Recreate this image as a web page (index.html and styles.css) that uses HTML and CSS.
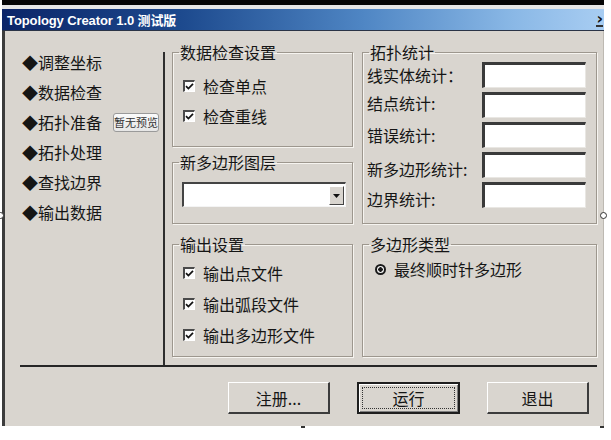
FILE: index.html
```html
<!DOCTYPE html>
<html lang="zh-CN">
<head>
<meta charset="utf-8">
<title>Topology Creator 1.0</title>
<link rel="stylesheet" href="styles.css">
</head>
<body>
<div class="window">
  <div class="topbar"></div>
  <div class="topgap"></div>
  <div class="titlebar">
    <span class="title">Topology Creator 1.0 测试版</span>
    <span class="close">›</span>
  </div>
  <div class="client">
    <div class="main">
      <ul class="steps">
        <li>◆调整坐标</li>
        <li>◆数据检查</li>
        <li>◆拓扑准备<button class="preview">暂无预览</button></li>
        <li>◆拓扑处理</li>
        <li>◆查找边界</li>
        <li>◆输出数据</li>
      </ul>
      <div class="vsep"></div>
      <div class="col mid">
        <fieldset class="grp g1">
          <legend>数据检查设置</legend>
          <div class="body">
            <div class="chk"><span class="box"><svg viewBox="0 0 9 9" width="9" height="9"><path d="M1 4.2 L3.4 6.6 L8 1.8" fill="none" stroke="#111" stroke-width="1.7"/></svg></span>检查单点</div>
            <div class="chk"><span class="box"><svg viewBox="0 0 9 9" width="9" height="9"><path d="M1 4.2 L3.4 6.6 L8 1.8" fill="none" stroke="#111" stroke-width="1.7"/></svg></span>检查重线</div>
          </div>
        </fieldset>
        <fieldset class="grp g2">
          <legend>新多边形图层</legend>
          <div class="body">
            <div class="combo"><span class="drop"><svg viewBox="0 0 7 4" width="7" height="4"><path d="M0 0 H7 L3.5 4 Z" fill="#111"/></svg></span></div>
          </div>
        </fieldset>
        <fieldset class="grp g3">
          <legend>输出设置</legend>
          <div class="body">
            <div class="chk row31"><span class="box"><svg viewBox="0 0 9 9" width="9" height="9"><path d="M1 4.2 L3.4 6.6 L8 1.8" fill="none" stroke="#111" stroke-width="1.7"/></svg></span>输出点文件</div>
            <div class="chk row31"><span class="box"><svg viewBox="0 0 9 9" width="9" height="9"><path d="M1 4.2 L3.4 6.6 L8 1.8" fill="none" stroke="#111" stroke-width="1.7"/></svg></span>输出弧段文件</div>
            <div class="chk row31"><span class="box"><svg viewBox="0 0 9 9" width="9" height="9"><path d="M1 4.2 L3.4 6.6 L8 1.8" fill="none" stroke="#111" stroke-width="1.7"/></svg></span>输出多边形文件</div>
          </div>
        </fieldset>
      </div>
      <div class="col right">
        <fieldset class="grp ga">
          <legend>拓扑统计</legend>
          <div class="body stats">
            <span class="lbl first">线实体统计：</span><span class="field"></span>
            <span class="lbl up">结点统计:</span><span class="field"></span>
            <span class="lbl">错误统计:</span><span class="field"></span>
            <span class="lbl down">新多边形统计:</span><span class="field"></span>
            <span class="lbl down">边界统计:</span><span class="field"></span>
          </div>
        </fieldset>
        <fieldset class="grp gb">
          <legend>多边形类型</legend>
          <div class="body">
            <div class="radio"><span class="dotbox"></span>最终顺时针多边形</div>
          </div>
        </fieldset>
      </div>
    </div>
    <div class="hr"></div>
    <div class="btns">
      <button class="btn">注册...</button>
      <button class="btn focus"><span class="focusring">运行</span></button>
      <button class="btn">退出</button>
    </div>
  </div>
  <span class="handle h-left"></span>
  <span class="handle h-right"></span>
  <span class="tick t-mid"></span>
  <span class="tick t-end"></span>
</div>
</body>
</html>
```

FILE: styles.css
```css
* { box-sizing: border-box; }

html, body {
  margin: 0;
  padding: 0;
  background: #ffffff;
}

body {
  width: 611px;
  height: 440px;
  overflow: hidden;
  font-family: "Noto Sans CJK SC", "Liberation Sans", sans-serif;
  color: #151515;
}

.window {
  position: relative;
  width: 602px;
  margin-left: 2px;
}

.topbar {
  height: 5px;
  background: #050505;
}

.topgap {
  height: 4px;
  background: #e6e6e6;
}

.titlebar {
  height: 22px;
  display: flex;
  align-items: center;
  justify-content: space-between;
  padding: 0 1px 0 5px;
  background: linear-gradient(90deg, #0b2468 0%, #1d4a8e 30%, #4f86c4 60%, #8ab8e6 85%, #a8cdf2 100%);
  border-bottom: 1px solid #2a3346;
}

.title {
  font-family: "Liberation Sans", "Noto Sans CJK SC", sans-serif;
  font-weight: bold;
  font-size: 13px;
  color: #ffffff;
  letter-spacing: -0.1px;
}

.close {
  font-family: "DejaVu Sans", sans-serif;
  font-weight: bold;
  font-size: 16px;
  line-height: 13px;
  color: #111;
  border-bottom: 2px solid #333;
}

.client {
  height: 395px;
  background: #d9d5cf;
  border-left: 3px solid #3c3c3c;
  border-right: 1px solid #bdb9b2;
  padding-top: 11px;
}

.main {
  display: flex;
  height: 323px;
}

.steps {
  list-style: none;
  margin: 0;
  padding: 5px 0 0 17px;
  width: 158px;
  font-size: 16px;
}

.steps li {
  height: 30px;
  line-height: 30px;
  display: flex;
  align-items: center;
  white-space: nowrap;
}

.preview {
  margin-left: 11px;
  width: 46px;
  height: 19px;
  padding: 0;
  font-family: "Noto Sans CJK SC", sans-serif;
  font-size: 11px;
  line-height: 17px;
  color: #333;
  background: linear-gradient(#fbfbfb, #e6e6e6);
  border: 1px solid #9a9a9a;
  border-radius: 3px;
}

.vsep {
  width: 2px;
  margin-top: 10px;
  background: #2e2e2e;
}

.col {
  display: flex;
  flex-direction: column;
}

.mid {
  width: 181px;
  margin-left: 7px;
}

.right {
  width: 235px;
  margin-left: 9px;
}

.grp {
  margin: 0;
  padding: 0;
  min-width: 0;
  border: 1px solid #9d978e;
  box-shadow: inset 1px 1px 0 #f6f4f0, 1px 1px 0 #f6f4f0;
}

.grp legend {
  margin-left: 6px;
  padding: 0 1px;
  font-size: 16px;
  line-height: 20px;
  color: #151515;
}

.g1 { height: 105px; }
.g1 .body { padding: 9px 0 0 10px; }
.g2 { height: 72px; margin-top: 5px; }
.g2 .body { padding: 10px 0 0 9px; }
.g3 { height: 123px; margin-top: 10px; }
.g3 .body { padding: 3px 0 0 10px; }
.ga { height: 182px; }
.ga .body { padding: 0 0 0 4px; }
.gb { height: 123px; margin-top: 10px; }
.gb .body { padding: 3px 0 0 12px; }

.chk {
  height: 30px;
  display: flex;
  align-items: center;
  font-size: 16px;
}

.chk.row31 { height: 31px; }

.box {
  width: 12px;
  height: 12px;
  margin-right: 8px;
  display: flex;
  align-items: center;
  justify-content: center;
  background: #fbfbfb;
  border-top: 2px solid #4a4a4a;
  border-left: 2px solid #4a4a4a;
  border-right: 1px solid #ffffff;
  border-bottom: 1px solid #ffffff;
}

.combo {
  width: 164px;
  height: 25px;
  display: flex;
  justify-content: flex-end;
  align-items: stretch;
  padding: 2px 1px 1px 0;
  background: #ffffff;
  border-top: 2px solid #444;
  border-left: 2px solid #444;
  border-right: 1px solid #f4f4f4;
  border-bottom: 1px solid #f4f4f4;
}

.drop {
  width: 15px;
  display: flex;
  align-items: center;
  justify-content: center;
  background: #d9d5cf;
  border-top: 1px solid #fff;
  border-left: 1px solid #fff;
  border-right: 1px solid #444;
  border-bottom: 1px solid #444;
}

.stats {
  display: grid;
  grid-template-columns: 115px 104px;
  grid-auto-rows: 30px;
  font-size: 16px;
}

.lbl {
  line-height: 20px;
  align-self: start;
  margin-top: 3px;
  white-space: nowrap;
}

.lbl.first { margin-top: 3px; }
.lbl.up { margin-top: 1px; }
.lbl.down { margin-top: 7px; }

.field {
  height: 26px;
  background: #ffffff;
  border-top: 3px solid #3a3a3a;
  border-left: 3px solid #3a3a3a;
  border-right: 1px solid #e9e7e3;
  border-bottom: 1px solid #e9e7e3;
}

.radio {
  height: 24px;
  display: flex;
  align-items: center;
  font-size: 16px;
}

.dotbox {
  width: 11px;
  height: 11px;
  margin-right: 8px;
  border: 2px solid #1a1a1a;
  border-radius: 50%;
  background: radial-gradient(circle, #1a1a1a 0 2px, #f4f4f4 2.5px);
}

.hr {
  height: 2px;
  margin: 0 6px 0 15px;
  background: #262626;
}

.btns {
  display: flex;
  justify-content: flex-end;
  gap: 27px;
  margin-top: 15px;
  padding-right: 14px;
}

.btn {
  width: 102px;
  height: 32px;
  padding: 0;
  font-family: "Noto Sans CJK SC", sans-serif;
  font-size: 16px;
  color: #151515;
  background: #d9d5cf;
  border-top: 1px solid #ffffff;
  border-left: 1px solid #ffffff;
  border-right: 2px solid #3c3c3c;
  border-bottom: 2px solid #3c3c3c;
}

.btn.focus {
  width: 103px;
  border: 2px solid #1e1e1e;
  box-shadow: inset 1px 1px 0 #ffffff, inset -1px -1px 0 #808080;
  padding: 3px;
}

.focusring {
  display: flex;
  width: 100%;
  height: 100%;
  align-items: center;
  justify-content: center;
  border: 1px dotted #333;
}

.handle {
  position: absolute;
  top: 212px;
  width: 7px;
  height: 7px;
  border: 1px solid #333;
  border-radius: 50%;
  background: #fff;
}

.h-left { left: -5px; }
.h-right { right: -3px; }

.tick {
  position: absolute;
  top: 426px;
  width: 4px;
  height: 2px;
  background: #333;
}

.t-mid { left: 299px; }
.t-end { left: 598px; }
```
